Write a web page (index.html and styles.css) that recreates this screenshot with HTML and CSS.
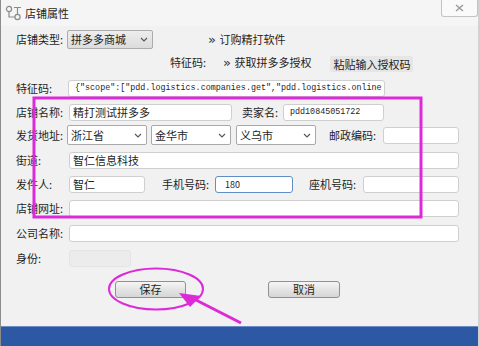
FILE: index.html
```html
<!DOCTYPE html>
<html lang="zh-CN">

<head>
    <meta charset="UTF-8">
    <meta name="viewport" content="width=device-width, initial-scale=1.0">
    <title>店铺属性</title>

    <link rel="stylesheet" href="styles.css">
</head>

<body>
    <div class="window">
        <div class="titlebar">
            <svg class="app-icon" viewBox="0 0 17 16" fill="none" stroke="#8a8a8a" stroke-width="1.2">
                <circle cx="4" cy="4" r="2.6" />
                <circle cx="12.5" cy="12" r="2.6" />
                <path d="M4 6.6V12h5.9M9 2.5h7M12.5 2.5v7" />
            </svg>
            <span class="title">店铺属性</span>
            <div class="close-btn">
                <svg width="9" height="8" viewBox="0 0 9 8" fill="none" stroke="#9a9a9a" stroke-width="1.4">
                    <path d="M1 1l7 6M8 1L1 7" />
                </svg>
            </div>
        </div>

        <div class="content">
            <div class="row">
                <span class="lbl w51">店铺类型:</span>
                <div class="select select-grey w86">
                    <span>拼多多商城</span>
                    <svg class="chev" viewBox="0 0 8 5"><path d="M1 1l3 3 3-3" /></svg>
                </div>
                <span class="link ml55"><b>»</b> 订购精打软件</span>
            </div>

            <div class="row mt3">
                <span class="lbl ml154">特征码:</span>
                <span class="link"><b>»</b> 获取拼多多授权</span>
                <button class="flat-btn">粘贴输入授权码</button>
            </div>

            <div class="row mt6">
                <span class="lbl w52">特征码:</span>
                <div class="field mono w317">{"scope":["pdd.logistics.companies.get","pdd.logistics.online</div>
            </div>

            <div class="row">
                <span class="lbl">店铺名称:</span>
                <div class="field w163">精打测试拼多多</div>
                <span class="lbl ml10 w41">卖家名:</span>
                <div class="field mono w101">pdd10845051722</div>
            </div>

            <div class="row mt3">
                <span class="lbl w51">发货地址:</span>
                <div class="select w80">
                    <span>浙江省</span>
                    <svg class="chev" viewBox="0 0 8 5"><path d="M1 1l3 3 3-3" /></svg>
                </div>
                <div class="select w80 ml4">
                    <span>金华市</span>
                    <svg class="chev" viewBox="0 0 8 5"><path d="M1 1l3 3 3-3" /></svg>
                </div>
                <div class="select w80 ml5">
                    <span>义乌市</span>
                    <svg class="chev" viewBox="0 0 8 5"><path d="M1 1l3 3 3-3" /></svg>
                </div>
                <span class="lbl ml13 w54">邮政编码:</span>
                <div class="field w76"></div>
            </div>

            <div class="row mt5">
                <span class="lbl">街道:</span>
                <div class="field w390">智仁信息科技</div>
            </div>

            <div class="row">
                <span class="lbl">发件人:</span>
                <div class="field w76">智仁</div>
                <span class="lbl ml17">手机号码:</span>
                <div class="field focused w78">180</div>
                <span class="lbl ml16 w54">座机号码:</span>
                <div class="field w96"></div>
            </div>

            <div class="row">
                <span class="lbl">店铺网址:</span>
                <div class="field w390"></div>
            </div>

            <div class="row mt5">
                <span class="lbl">公司名称:</span>
                <div class="field w390"></div>
            </div>

            <div class="row mt5">
                <span class="lbl">身份:</span>
                <div class="field disabled w62"></div>
            </div>

            <div class="row mt11">
                <button class="btn ml99 w71">保存</button>
                <button class="btn ml82 w72">取消</button>
            </div>
        </div>

        <div class="footer-bar"></div>
    </div>

    <!-- red-pen annotations over the dialog -->
    <svg class="marks" width="480" height="346" viewBox="0 0 480 346" fill="none" stroke="#dc2ad9">
        <rect x="34" y="98" width="387" height="119" stroke-width="3" />
        <ellipse cx="156" cy="289" rx="47" ry="20.5" stroke-width="2" />
        <path d="M241 323L192 298" stroke-width="3" />
        <polygon points="179,293 201,296 190,307" fill="#dc2ad9" stroke="none" />
    </svg>
</body>

</html>
```

FILE: styles.css
```css
* {
    box-sizing: border-box;
}

body {
    margin: 0;
    font-family: "Noto Sans CJK SC", "Noto Sans", sans-serif;
    font-size: 11px;
    color: #1e1e1e;
}

.window {
    width: 480px;
    height: 346px;
    background-color: #f1f1f1;
    border-left: 1px solid #8c8c8c;
    border-right: 2px solid #d2d2d2;
    display: flex;
    flex-direction: column;
    overflow: hidden;
}

.titlebar {
    height: 26px;
    display: flex;
    align-items: center;
    padding-left: 4px;
    background-color: #f5f5f5;
}

.app-icon {
    width: 17px;
    height: 16px;
}

.title {
    margin-left: 3px;
}

.close-btn {
    margin-left: auto;
    align-self: flex-start;
    width: 37px;
    height: 17px;
    border: 1px solid #c4c4c4;
    border-top: none;
    border-radius: 0 0 3px 3px;
    background-color: #fafafa;
    display: flex;
    align-items: center;
    justify-content: center;
}

.content {
    flex: 1;
    padding: 3px 0 0 15px;
}

.row {
    display: flex;
    align-items: center;
    height: 20px;
    margin-top: 4px;
}

.row:first-child {
    margin-top: 0;
}

.lbl {
    width: 53px;
    flex-shrink: 0;
    white-space: nowrap;
}

.link {
    white-space: nowrap;
}

.link b {
    font-weight: normal;
    font-size: 13px;
    font-family: "DejaVu Sans", sans-serif;
    color: #333;
    margin-right: 1px;
}

.field {
    height: 17px;
    background-color: #fff;
    border: 1px solid #cfcfcf;
    border-radius: 3px;
    padding: 0 3px;
    line-height: 15px;
    white-space: nowrap;
    overflow: hidden;
}

.field.mono {
    font-family: "Liberation Mono", monospace;
    font-size: 8.4px;
    padding-left: 6px;
}

.field.focused {
    border-color: #5f8fc4;
    font-size: 9px;
    padding-left: 9px;
}

.field.disabled {
    background-color: #ececec;
    border-color: #e4e4e4;
}

.select {
    height: 20px;
    background-color: #fff;
    border: 1px solid #a9a9a9;
    border-radius: 2px;
    padding: 0 4px 0 3px;
    display: flex;
    align-items: center;
    justify-content: space-between;
}

.select-grey {
    height: 19px;
    background: linear-gradient(#ededed, #dcdcdc);
    border-color: #acacac;
}

.chev {
    width: 8px;
    height: 5px;
    fill: none;
    stroke: #555;
    stroke-width: 1.1;
}

.flat-btn {
    margin-left: 19px;
    width: 83px;
    height: 16px;
    margin-top: 4px;
    padding: 0;
    border: none;
    border-radius: 2px;
    background-color: #e6e6e6;
    font-family: inherit;
    font-size: 11px;
    color: #1e1e1e;
}

.btn {
    height: 17px;
    padding: 0;
    border: 1px solid #8f9090;
    border-radius: 3px;
    background: linear-gradient(#f6f6f6, #e4e4e4 50%, #d6d6d6);
    font-family: inherit;
    font-size: 11px;
    color: #1e1e1e;
    line-height: 15px;
}

.footer-bar {
    height: 20px;
    background-color: #2c58a4;
    border-top: 1px solid #6c8cc6;
}

.marks {
    position: absolute;
    top: 0;
    left: 0;
    pointer-events: none;
}

/* widths and offsets */
.w41 { width: 41px; }
.w51 { width: 51px; }
.w52 { width: 52px; }
.w54 { width: 54px; }
.w62 { width: 62px; }
.w71 { width: 71px; }
.w72 { width: 72px; }
.w76 { width: 76px; }
.w78 { width: 78px; }
.w80 { width: 80px; }
.w86 { width: 86px; }
.w96 { width: 96px; }
.w101 { width: 101px; }
.w163 { width: 163px; }
.w317 { width: 317px; }
.w390 { width: 390px; }

.ml4 { margin-left: 4px; }
.ml5 { margin-left: 5px; }
.ml10 { margin-left: 10px; }
.ml13 { margin-left: 13px; }
.ml16 { margin-left: 16px; }
.ml17 { margin-left: 17px; }
.ml55 { margin-left: 55px; }
.ml82 { margin-left: 82px; }
.ml99 { margin-left: 99px; }
.ml154 { margin-left: 154px; }

.mt3 { margin-top: 3px; }
.mt5 { margin-top: 5px; }
.mt6 { margin-top: 6px; }
.mt11 { margin-top: 11px; }
```
